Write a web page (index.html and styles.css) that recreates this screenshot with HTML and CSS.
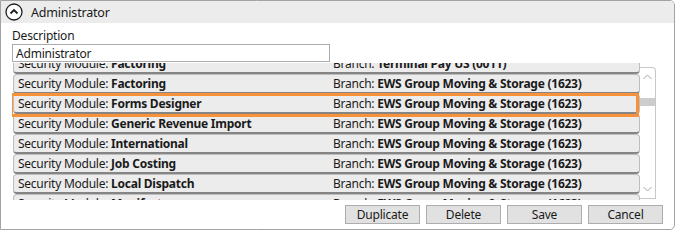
FILE: index.html
```html
<!doctype html>
<html>
	<head>
		<link rel="stylesheet" href="styles.css">
	</head>
	<body>
		<div class="panel">
			<div class="panel-header">
				<span class="toggle">
					<svg width="18" height="18" viewBox="0 0 18 18">
						<circle cx="9" cy="9" r="8" fill="#fff" stroke="#1e1e1e" stroke-width="1.3"/>
						<path d="M5.5 10.5 L9 7 L12.5 10.5" fill="none" stroke="#1e1e1e" stroke-width="1.8"/>
					</svg>
				</span>
				<span class="panel-title">Administrator</span>
			</div>

			<div class="panel-body">
				<label class="field-label" for="description">Description</label>
				<input id="description" class="field-text" type="text" value="Administrator">

				<div class="listbox">
					<div class="list-viewport">
						<div class="list-rows">
							<div class="row"><span class="cell-module">Security Module: <b>Factoring</b></span><span class="cell-branch">Branch: <b>Terminal Pay US (0011)</b></span></div>
							<div class="row"><span class="cell-module">Security Module: <b>Factoring</b></span><span class="cell-branch">Branch: <b>EWS Group Moving &amp; Storage (1623)</b></span></div>
							<div class="row"><span class="cell-module">Security Module: <b>Forms Designer</b></span><span class="cell-branch">Branch: <b>EWS Group Moving &amp; Storage (1623)</b></span></div>
							<div class="row"><span class="cell-module">Security Module: <b>Generic Revenue Import</b></span><span class="cell-branch">Branch: <b>EWS Group Moving &amp; Storage (1623)</b></span></div>
							<div class="row"><span class="cell-module">Security Module: <b>International</b></span><span class="cell-branch">Branch: <b>EWS Group Moving &amp; Storage (1623)</b></span></div>
							<div class="row"><span class="cell-module">Security Module: <b>Job Costing</b></span><span class="cell-branch">Branch: <b>EWS Group Moving &amp; Storage (1623)</b></span></div>
							<div class="row"><span class="cell-module">Security Module: <b>Local Dispatch</b></span><span class="cell-branch">Branch: <b>EWS Group Moving &amp; Storage (1623)</b></span></div>
							<div class="row"><span class="cell-module">Security Module: <b>Manifest</b></span><span class="cell-branch">Branch: <b>EWS Group Moving &amp; Storage (1623)</b></span></div>
						</div>
						<div class="highlight"></div>
					</div>
					<div class="scrollbar">
						<svg class="arrow" width="9" height="6" viewBox="0 0 9 6"><path d="M0.5 5 L4.5 1 L8.5 5" fill="none" stroke="#a6a6a6" stroke-width="1"/></svg>
						<div class="track"><div class="thumb"></div></div>
						<svg class="arrow" width="9" height="6" viewBox="0 0 9 6"><path d="M0.5 1 L4.5 5 L8.5 1" fill="none" stroke="#a6a6a6" stroke-width="1"/></svg>
					</div>
				</div>

				<div class="actions">
					<button class="btn">Duplicate</button>
					<button class="btn">Delete</button>
					<button class="btn">Save</button>
					<button class="btn">Cancel</button>
				</div>
			</div>
		</div>
	</body>
</html>
```

FILE: styles.css
```css
body {
	margin: 0;
	background: #fff;
	font-family: "Noto Sans", "Open Sans", sans-serif;
	font-size: 12px;
	color: #1a1a1a;
}

.panel {
	width: 673px;
	height: 228px;
	border: 1px solid #a3a3a3;
	border-radius: 0 5px 5px 0;
	display: flex;
	flex-direction: column;
	overflow: hidden;
}

.panel-header {
	flex: none;
	height: 22px;
	background: #ececec;
	display: flex;
	align-items: center;
	padding-left: 4px;
}
	.toggle {
		display: flex;
		width: 18px;
		height: 18px;
	}
	.panel-title {
		margin-left: 8px;
		font-size: 12.5px;
		letter-spacing: -0.2px;
	}

.panel-body {
	display: flex;
	flex-direction: column;
	padding: 6px 0 0 11px;
}

.field-label {
	line-height: 14px;
	height: 15px;
	letter-spacing: -0.2px;
}

.field-text {
	width: 318px;
	height: 18px;
	box-sizing: border-box;
	margin: 0;
	border: 1px solid #ababab;
	padding: 0 3px;
	font-family: inherit;
	font-size: 12px;
	letter-spacing: -0.2px;
	color: #1a1a1a;
	outline: none;
}

.listbox {
	flex: none;
	display: flex;
	width: 645px;
	height: 137px;
	margin-top: 1px;
}

.list-viewport {
	position: relative;
	width: 628px;
	height: 137px;
	overflow: hidden;
}
	.list-rows {
		margin-top: -9px;
	}

.row {
	display: flex;
	align-items: center;
	height: 17px;
	margin-left: 1px;
	background: #ececec;
	border: 1px solid #bdbdbd;
	border-bottom: 2px solid #858585;
	border-radius: 4px;
	white-space: nowrap;
	letter-spacing: -0.25px;
}
	.row b {
		font-weight: 700;
	}
	.cell-module {
		width: 315px;
		padding-left: 4px;
	}

.highlight {
	position: absolute;
	left: -2px;
	top: 30px;
	width: 623px;
	height: 18px;
	border: 3px solid #f7923a;
	pointer-events: none;
}

.scrollbar {
	width: 16px;
	margin-top: 4px;
	height: 132px;
	border: 1px solid #c8c8c8;
	border-left: none;
	border-radius: 0 4px 0 0;
	display: flex;
	flex-direction: column;
	align-items: center;
	padding: 6px 0;
	box-sizing: border-box;
}
	.scrollbar .arrow {
		flex: none;
	}
	.track {
		flex: 1;
		width: 100%;
		padding-top: 18px;
	}
	.thumb {
		height: 8px;
		background: #cdcdcd;
	}

.actions {
	display: flex;
	justify-content: flex-end;
	gap: 6px;
	padding: 5px 11px 0 0;
}

.btn {
	width: 75px;
	height: 19px;
	padding: 0;
	background: #e1e1e1;
	border: 1px solid #adadad;
	font-family: inherit;
	font-size: 12px;
	letter-spacing: -0.2px;
	color: #1a1a1a;
}
```
